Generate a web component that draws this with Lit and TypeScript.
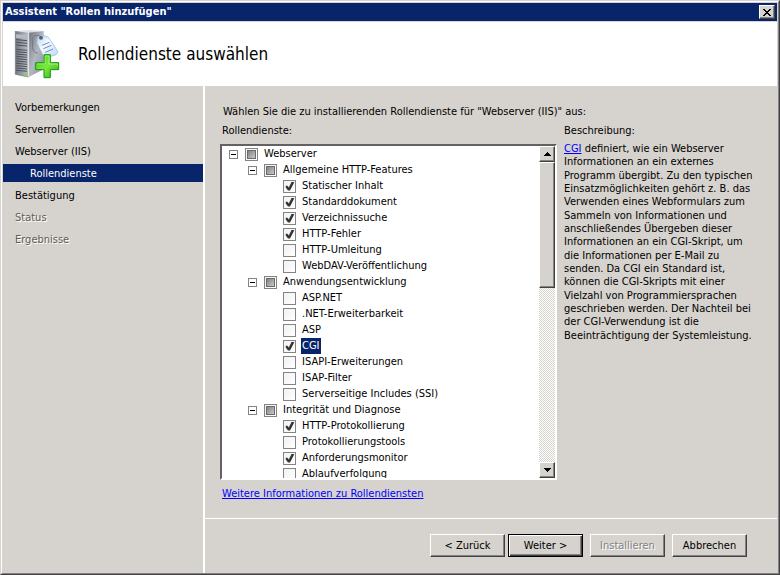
import { LitElement, html, css, svg } from "lit";
import { customElement, property, state } from "lit/decorators.js";
import { classMap } from "lit/directives/class-map.js";

interface RoleService {
  label: string;
  level: number;
  mark: "on" | "off" | "mixed";
}

const SERVICES: RoleService[] = [
  { label: "Webserver", level: 0, mark: "mixed" },
  { label: "Allgemeine HTTP-Features", level: 1, mark: "mixed" },
  { label: "Statischer Inhalt", level: 2, mark: "on" },
  { label: "Standarddokument", level: 2, mark: "on" },
  { label: "Verzeichnissuche", level: 2, mark: "on" },
  { label: "HTTP-Fehler", level: 2, mark: "on" },
  { label: "HTTP-Umleitung", level: 2, mark: "off" },
  { label: "WebDAV-Veröffentlichung", level: 2, mark: "off" },
  { label: "Anwendungsentwicklung", level: 1, mark: "mixed" },
  { label: "ASP.NET", level: 2, mark: "off" },
  { label: ".NET-Erweiterbarkeit", level: 2, mark: "off" },
  { label: "ASP", level: 2, mark: "off" },
  { label: "CGI", level: 2, mark: "on" },
  { label: "ISAPI-Erweiterungen", level: 2, mark: "off" },
  { label: "ISAP-Filter", level: 2, mark: "off" },
  { label: "Serverseitige Includes (SSI)", level: 2, mark: "off" },
  { label: "Integrität und Diagnose", level: 1, mark: "mixed" },
  { label: "HTTP-Protokollierung", level: 2, mark: "on" },
  { label: "Protokollierungstools", level: 2, mark: "off" },
  { label: "Anforderungsmonitor", level: 2, mark: "on" },
  { label: "Ablaufverfolgung", level: 2, mark: "off" },
];

const STEPS = [
  { label: "Vorbemerkungen" },
  { label: "Serverrollen" },
  { label: "Webserver (IIS)" },
  { label: "Rollendienste", current: true },
  { label: "Bestätigung" },
  { label: "Status", disabled: true },
  { label: "Ergebnisse", disabled: true },
];

const DESCRIPTION = [
  "Informationen an ein externes",
  "Programm übergibt. Zu den typischen",
  "Einsatzmöglichkeiten gehört z. B. das",
  "Verwenden eines Webformulars zum",
  "Sammeln von Informationen und",
  "anschließendes Übergeben dieser",
  "Informationen an ein CGI-Skript, um",
  "die Informationen per E-Mail zu",
  "senden. Da CGI ein Standard ist,",
  "können die CGI-Skripts mit einer",
  "Vielzahl von Programmiersprachen",
  "geschrieben werden. Der Nachteil bei",
  "der CGI-Verwendung ist die",
  "Beeinträchtigung der Systemleistung.",
];

const raised = css`
  border: 1px solid;
  border-color: #ffffff #424142 #424142 #ffffff;
  box-shadow: inset -1px -1px 0 #848284;
  background: #d6d3ce;
`;

const base = css`
  * { box-sizing: border-box; }
  button {
    margin: 0;
    padding: 0;
    font: inherit;
    color: inherit;
    display: flex;
    align-items: center;
    justify-content: center;
  }
  a { color: #0000ff; }
`;

@customElement("wizard-steps")
class WizardSteps extends LitElement {
  static styles = [base, css`
    :host { display: block; padding-top: 12px; }
    .steps { list-style: none; margin: 0; padding: 0; display: flex; flex-direction: column; gap: 4px; }
    .step { line-height: 16px; padding: 2px 0 0 12px; }
    .link { color: #000000; text-decoration: none; }
    .current { background: #08246b; padding-left: 27px; }
    .current .link { color: #ffffff; }
    .disabled { color: #5f5d52; text-shadow: 1px 1px 0 #ffffff; }
  `];

  render() {
    return html`<ol class="steps">
      ${STEPS.map((s) => html`<li class=${classMap({ step: true, current: !!s.current, disabled: !!s.disabled })}>${
        s.disabled ? s.label : html`<a class="link" href="#">${s.label}</a>`
      }</li>`)}
    </ol>`;
  }
}

@customElement("service-row")
class ServiceRow extends LitElement {
  @property({ attribute: false }) item!: RoleService;
  @property({ type: Boolean }) selected = false;

  static styles = [base, css`
    :host { display: block; }
    .row { display: flex; align-items: center; height: 16px; padding-left: 7px; }
    .level1 { padding-left: 26px; }
    .level2 { padding-left: 45px; }
    .toggle {
      width: 9px; height: 9px; margin-right: 7px;
      border: 1px solid #848284; background: #ffffff; flex: none;
    }
    .toggle::before { content: ""; width: 5px; height: 1px; background: #000000; }
    .spacer { width: 16px; flex: none; }
    .label { display: flex; align-items: center; gap: 5px; }
    .text { line-height: 16px; padding: 0 1px; white-space: nowrap; }
    .selected { background: #08246b; color: #ffffff; }
    .box {
      appearance: none; width: 13px; height: 13px; margin: 0; flex: none;
      border: 1px solid #848284;
      background: linear-gradient(135deg, #f3f1f3, #ffffff);
      display: grid; place-items: center;
    }
    .box::before { content: ""; width: 9px; height: 9px; box-sizing: border-box; }
    .box:checked::before {
      background: #353535;
      clip-path: polygon(75% 0, 100% 0, 100% 14%, 56% 100%, 34% 100%, 8% 66%, 8% 48%, 28% 48%, 42% 68%);
    }
    .box:indeterminate::before {
      border: 1px solid #6b6b6b;
      background: linear-gradient(135deg, #828282, #c8c8c8);
    }
  `];

  render() {
    const { label, level, mark } = this.item;
    return html`<div class="row level${level}" role="treeitem">
      ${level < 2
        ? html`<button class="toggle" aria-label="${label} reduzieren"></button>`
        : html`<span class="spacer"></span>`}
      <label class="label">
        <input class="box" type="checkbox" .checked=${mark === "on"} .indeterminate=${mark === "mixed"}>
        <span class=${classMap({ text: true, selected: this.selected })}>${label}</span>
      </label>
    </div>`;
  }
}

@customElement("service-tree")
class ServiceTree extends LitElement {
  @state() private selected = "CGI";

  static styles = [base, css`
    :host {
      display: flex; min-height: 0; background: #ffffff; box-sizing: border-box;
      border: 2px solid; border-color: #636163 #ffffff #ffffff #636163;
    }
    .rows { flex: 1; min-width: 0; overflow: hidden; }
    .bar {
      width: 16px; display: flex; flex-direction: column;
      background: repeating-conic-gradient(#d6d3ce 0 25%, #ffffff 0 50%) 0 0 / 2px 2px;
    }
    .arrow, .thumb { ${raised} }
    .arrow { width: 16px; height: 16px; flex: none; }
    .thumb { flex: 0 0 38%; }
    .track { flex: 1; }
    .glyph { display: block; }
  `];

  render() {
    return html`
      <div class="rows" role="tree" aria-label="Rollendienste">
        ${SERVICES.map((s) => html`<service-row .item=${s} ?selected=${s.label === this.selected}
          @click=${() => (this.selected = s.label)}></service-row>`)}
      </div>
      <div class="bar">
        <button class="arrow" aria-label="Nach oben">
          <svg class="glyph" width="7" height="4" shape-rendering="crispEdges"><path d="M3 0h1v1h1v1h1v1h1v1H0V3h1V2h1V1h1z"/></svg>
        </button>
        <div class="thumb"></div>
        <div class="track"></div>
        <button class="arrow" aria-label="Nach unten">
          <svg class="glyph" width="7" height="4" shape-rendering="crispEdges"><path d="M0 0h7v1H6v1H5v1H4v1H3V3H2V2H1V1H0z"/></svg>
        </button>
      </div>`;
  }
}

const vents = [122, 130, 138, 151, 158, 165, 172, 179, 186, 193, 200, 207, 214];

const serverIcon = svg`
  <defs>
    <linearGradient id="front" x1="0" x2="1"><stop offset="0" stop-color="#72767f"/><stop offset="1" stop-color="#bfc3ca"/></linearGradient>
    <linearGradient id="side" x1="0" x2="1" y1="0" y2="1"><stop offset="0" stop-color="#6d727c"/><stop offset=".5" stop-color="#b4b7bf"/><stop offset="1" stop-color="#8a8e96"/></linearGradient>
    <linearGradient id="tag" x1="0" x2="1" y1="0" y2="1"><stop offset="0" stop-color="#a9cbe8"/><stop offset=".4" stop-color="#f5faff"/><stop offset="1" stop-color="#b7d8f3"/></linearGradient>
    <linearGradient id="plus" x1="0" x2="1" y1="0" y2="1"><stop offset="0" stop-color="#39c61c"/><stop offset=".5" stop-color="#7de83f"/><stop offset="1" stop-color="#25b010"/></linearGradient>
  </defs>
  <path d="M86 95L131 93V208L86 231Z" fill="url(#side)"/>
  <path d="M46 93L86 95V231L46 223Z" fill="url(#front)"/>
  <path d="M46 93L88 90L131 93L86 98Z" fill="#dcdfe4"/>
  <path d="M86 97V230" stroke="#e4e6ea" stroke-width="3"/>
  <path d="M48 103L82 105V117L48 114Z" fill="#b4bac5"/>
  ${vents.map((y) => svg`<path d="M49 ${y - 3}L81 ${y}" stroke="#4c515c" stroke-width="3"/>`)}
  <path d="M46 93V223L86 231" fill="none" stroke="#70747c" stroke-width="2"/>
  <rect x="75" y="219" width="8" height="7" fill="#6de329"/>
  <path d="M127 111C116 103 98 103 98 119V143Q99 157 113 160" fill="none" stroke="#717987" stroke-width="3"/>
  <path d="M112 112L124 104L145 112L174 155L168 164L138 174L130 168L110 128Z" fill="url(#tag)" stroke="#91afcc" stroke-width="2"/>
  <circle cx="123" cy="113" r="6" fill="#59616f"/>
  <path d="M126 136L148 127M130 146L154 136M136 157L159 147" stroke="#7189c6" stroke-width="3"/>
  <path d="M132 164H151V188H176V209H151V233H132V209H107V188H132Z" fill="url(#plus)" stroke="#169513" stroke-width="3"/>
  <path d="M136 168H147V192H172V197" fill="none" stroke="#c2fa8c" stroke-width="2"/>
  <path d="M111 192H136V168" fill="none" stroke="#a0f070" stroke-width="2"/>`;

@customElement("app-root")
class AppRoot extends LitElement {
  static styles = [base, css`
    :host {
      display: flex; flex-direction: column; min-height: 100vh; box-sizing: border-box;
      border: 1px solid; border-color: #d6d3ce #424142 #424142 #d6d3ce;
      background: #d6d3ce; color: #000000;
      font: 11px/16px "DejaVu Sans Condensed", "DejaVu Sans", sans-serif;
      font-stretch: condensed;
    }
    .frame {
      flex: 1; display: flex; flex-direction: column;
      border: 1px solid; border-color: #ffffff #848284 #848284 #ffffff;
      padding: 1px 1px 0 1px;
    }
    .title {
      display: flex; align-items: center; justify-content: space-between;
      height: 18px; padding: 0 2px; background: #08246b; color: #ffffff; font-weight: bold;
    }
    .close { ${raised} width: 16px; height: 14px; }
    .glyph { display: block; }
    .header {
      display: flex; align-items: center; gap: 18px; height: 64px; margin-top: 1px;
      padding-left: 11px; background: #ffffff;
    }
    .heading { margin: 0; font-size: 17px; line-height: 20px; font-weight: normal; }
    .body { flex: 1; display: grid; grid-template-columns: 202px 1fr; }
    .steps { border-right: 2px solid #ffffff; }
    .main { display: flex; flex-direction: column; min-width: 0; }
    .content {
      flex: 1; display: grid; grid-template-columns: 337px 1fr; column-gap: 7px;
      padding: 18px 16px 16px 15px; align-items: start; align-content: start;
    }
    .intro { grid-column: 1 / -1; margin: 0 0 3px 3px; }
    .column { display: flex; flex-direction: column; }
    .caption { padding-left: 2px; margin-bottom: 5px; }
    .side .caption { padding-left: 0; margin-bottom: 3px; }
    .tree { height: 336px; }
    .more { align-self: flex-start; margin: 6px 0 0 2px; }
    .text { margin: 0; line-height: 13px; min-height: 200px; display: flex; flex-direction: column; justify-content: space-between; }
    .line { white-space: nowrap; }
    .footer {
      display: flex; justify-content: flex-end; gap: 7px; border-top: 1px solid #ffffff;
      padding: 15px 30px 16px 0;
    }
    .pair { display: flex; gap: 3px; }
    .button { ${raised} width: 75px; height: 23px; }
    .default { border-color: #000000; box-shadow: inset 1px 1px 0 #ffffff, inset -1px -1px 0 #424142, inset -2px -2px 0 #848284; }
    .button:disabled { color: #848284; text-shadow: 1px 1px 0 #ffffff; }
  `];

  render() {
    return html`<div class="frame">
      <div class="title">
        <span>Assistent "Rollen hinzufügen"</span>
        <button class="close" aria-label="Schließen">
          <svg class="glyph" width="8" height="7" shape-rendering="crispEdges"><path d="M0 0h2v1h1v1h2V1h1V0h2v1H7v1H6v1H5v1h1v1h1v1h1v1H6V6H5V5H3v1H2v1H0V6h1V5h1V4h1V3H2V2H1V1H0z"/></svg>
        </button>
      </div>
      <header class="header">
        <svg width="46" height="50" viewBox="42 87 138 150" aria-hidden="true">${serverIcon}</svg>
        <h1 class="heading">Rollendienste auswählen</h1>
      </header>
      <div class="body">
        <wizard-steps class="steps"></wizard-steps>
        <div class="main">
          <div class="content">
            <p class="intro">Wählen Sie die zu installierenden Rollendienste für "Webserver (IIS)" aus:</p>
            <div class="column">
              <span class="caption">Rollendienste:</span>
              <service-tree class="tree"></service-tree>
              <a class="more" href="#">Weitere Informationen zu Rollendiensten</a>
            </div>
            <div class="column side">
              <span class="caption">Beschreibung:</span>
              <p class="text">
                <span class="line"><a href="#">CGI</a> definiert, wie ein Webserver</span>
                ${DESCRIPTION.map((l) => html`<span class="line">${l}</span>`)}
              </p>
            </div>
          </div>
          <footer class="footer">
            <div class="pair">
              <button class="button">&lt; Zurück</button>
              <button class="button default">Weiter &gt;</button>
            </div>
            <button class="button" disabled>Installieren</button>
            <button class="button">Abbrechen</button>
          </footer>
        </div>
      </div>
    </div>`;
  }
}
